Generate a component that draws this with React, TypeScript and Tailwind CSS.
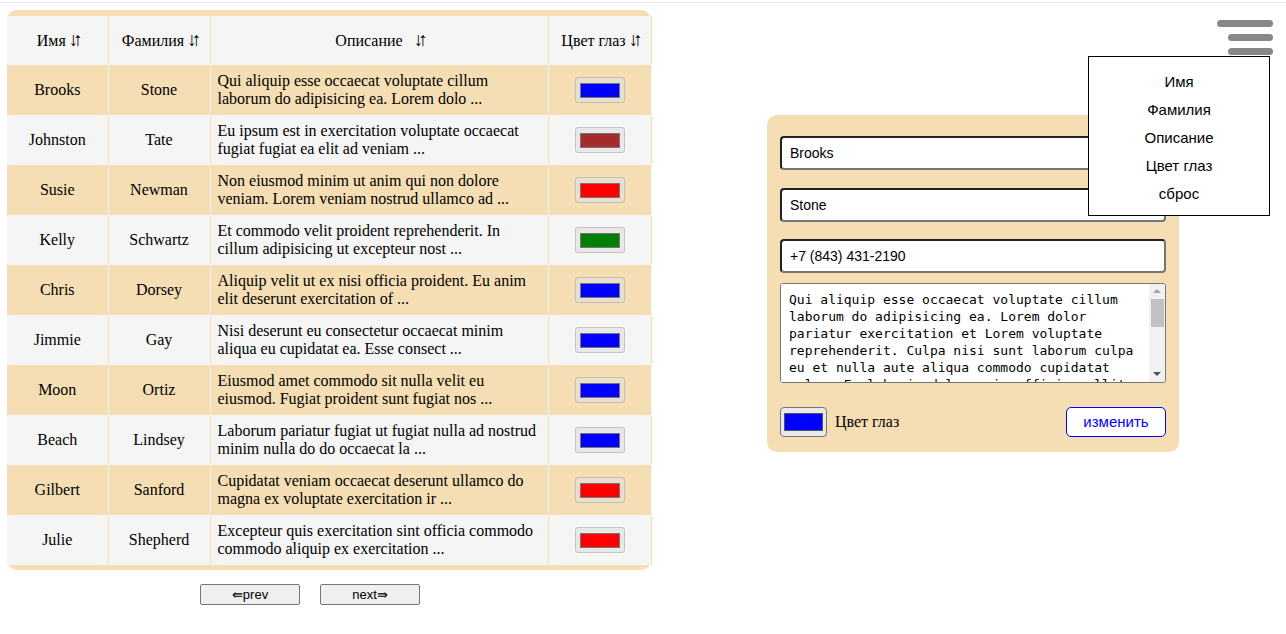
import React from 'react'

const serif = { fontFamily: '"Liberation Serif", "Times New Roman", serif' }
const sans = { fontFamily: '"Liberation Sans", Arial, sans-serif' }

type Person = { first: string; last: string; about: string; eye: string }

const people: Person[] = [
  { first: 'Brooks', last: 'Stone', about: 'Qui aliquip esse occaecat voluptate cillum laborum do adipisicing ea. Lorem dolo ...', eye: '#0000ff' },
  { first: 'Johnston', last: 'Tate', about: 'Eu ipsum est in exercitation voluptate occaecat fugiat fugiat ea elit ad veniam ...', eye: '#a52a2a' },
  { first: 'Susie', last: 'Newman', about: 'Non eiusmod minim ut anim qui non dolore veniam. Lorem veniam nostrud ullamco ad ...', eye: '#ff0000' },
  { first: 'Kelly', last: 'Schwartz', about: 'Et commodo velit proident reprehenderit. In cillum adipisicing ut excepteur nost ...', eye: '#008000' },
  { first: 'Chris', last: 'Dorsey', about: 'Aliquip velit ut ex nisi officia proident. Eu anim elit deserunt exercitation of ...', eye: '#0000ff' },
  { first: 'Jimmie', last: 'Gay', about: 'Nisi deserunt eu consectetur occaecat minim aliqua eu cupidatat ea. Esse consect ...', eye: '#0000ff' },
  { first: 'Moon', last: 'Ortiz', about: 'Eiusmod amet commodo sit nulla velit eu eiusmod. Fugiat proident sunt fugiat nos ...', eye: '#0000ff' },
  { first: 'Beach', last: 'Lindsey', about: 'Laborum pariatur fugiat ut fugiat nulla ad nostrud minim nulla do do occaecat la ...', eye: '#0000ff' },
  { first: 'Gilbert', last: 'Sanford', about: 'Cupidatat veniam occaecat deserunt ullamco do magna ex voluptate exercitation ir ...', eye: '#ff0000' },
  { first: 'Julie', last: 'Shepherd', about: 'Excepteur quis exercitation sint officia commodo commodo aliquip ex exercitation ...', eye: '#ff0000' },
]

const fullText =
  'Qui aliquip esse occaecat voluptate cillum laborum do adipisicing ea. Lorem dolor pariatur exercitation et Lorem voluptate reprehenderit. Culpa nisi sunt laborum culpa eu et nulla aute aliqua commodo cupidatat culpa. Eu laboris dolor enim officia mollit nostrud. Ipsum nulla dolore sunt ad.'

function Swatch({ color }: { color: string }) {
  return (
    <span className="inline-flex h-[26px] w-[50px] items-center justify-center rounded-[3px] border border-black/15 bg-[#e0e0e0]/60 align-middle">
      <span className="block h-[15px] w-[40px] border border-[#777]" style={{ backgroundColor: color }} />
    </span>
  )
}

function SortIcon() {
  return <span className="ml-[3px] inline-block text-[19px] leading-none tracking-[-5px]">↓↑</span>
}

export default function App() {
  return (
    <div className="relative min-h-[634px] w-full bg-white text-black" style={serif}>
      <div className="h-[3px] border-b border-[#e6e6e6]" />

      <div className="flex items-start pl-[7px] pt-[7px]">
        {/* table + pager */}
        <div>
          <div className="w-[644px] rounded-[10px] bg-[#f5deb3] pt-[6px] pb-[5px]">
            <table className="w-[644px] table-fixed border-collapse text-[16px]">
              <colgroup>
                <col className="w-[101px]" />
                <col className="w-[102px]" />
                <col className="w-[338px]" />
                <col className="w-[103px]" />
              </colgroup>
              <thead>
                <tr className="h-[49px] bg-[#f5f5f5]">
                  <th className="border-r border-[#f5deb3] font-normal">
                    Имя<SortIcon />
                  </th>
                  <th className="border-r border-[#f5deb3] font-normal">
                    Фамилия<SortIcon />
                  </th>
                  <th className="border-r border-[#f5deb3] font-normal">
                    Описание &nbsp;<SortIcon />
                  </th>
                  <th className="border-r border-[#f5deb3] font-normal">
                    Цвет глаз<SortIcon />
                  </th>
                </tr>
              </thead>
              <tbody>
                {people.map((p, i) => {
                  const odd = i % 2 === 0
                  const cell = odd ? 'border-r border-[#f5f5f5]' : 'border-r border-[#f5deb3]'
                  return (
                    <tr key={p.first} className={odd ? 'h-[50px] bg-[#f5deb3]' : 'h-[50px] bg-[#f5f5f5]'}>
                      <td className={cell + ' text-center'}>{p.first}</td>
                      <td className={cell + ' text-center'}>{p.last}</td>
                      <td className={cell + ' px-[7px] leading-[18px]'}>{p.about}</td>
                      <td className={cell + ' text-center'}>
                        <Swatch color={p.eye} />
                      </td>
                    </tr>
                  )
                })}
              </tbody>
            </table>
          </div>

          <div className="mt-[14px] flex gap-[20px] pl-[193px]" style={sans}>
            <button className="h-[21px] w-[100px] rounded-[2px] border border-[#767676] bg-[#efefef] text-[13px] leading-none">⇚prev</button>
            <button className="h-[21px] w-[100px] rounded-[2px] border border-[#767676] bg-[#efefef] text-[13px] leading-none">next⇛</button>
          </div>
        </div>

        {/* edit form */}
        <div className="ml-[116px] mt-[105px] flex w-[412px] flex-col rounded-[10px] bg-[#f5deb3] px-[13px] pt-[21px] pb-[15px]">
          <div className="flex flex-col text-[14px]" style={sans}>
            <input
              defaultValue="Brooks"
              className="h-[34px] rounded-[4px] border-2 border-t-[#222] border-l-[#222] border-r-[#767676] border-b-[#767676] bg-white px-[8px]"
            />
            <input
              defaultValue="Stone"
              className="mt-[18px] h-[34px] rounded-[4px] border-2 border-t-[#222] border-l-[#222] border-r-[#767676] border-b-[#767676] bg-white px-[8px]"
            />
            <input
              defaultValue="+7 (843) 431-2190"
              className="mt-[17px] h-[34px] rounded-[4px] border-2 border-t-[#222] border-l-[#222] border-r-[#767676] border-b-[#767676] bg-white px-[8px]"
            />
            <div className="mt-[10px] flex h-[100px] overflow-hidden rounded-[3px] border border-[#767676] bg-white">
              <textarea
                defaultValue={fullText}
                className="h-full flex-1 resize-none overflow-hidden bg-white pt-[7px] pb-[6px] pl-[8px] pr-[4px] text-[13px] leading-[17px]"
                style={{ fontFamily: '"DejaVu Sans Mono", monospace' }}
              />
              {/* scrollbar */}
              <div className="flex w-[16px] flex-col items-center bg-[#f1f1f1]">
                <span className="mt-[5px] block h-0 w-0 border-x-[4px] border-b-[4px] border-x-transparent border-b-[#a3a3a3]" />
                <span className="mt-[6px] block h-[28px] w-[13px] bg-[#c1c1c1]" />
                <span className="mt-auto mb-[6px] block h-0 w-0 border-x-[4px] border-t-[4px] border-x-transparent border-t-[#505050]" />
              </div>
            </div>
          </div>

          <div className="mt-[24px] flex items-center">
            <span className="flex h-[30px] w-[47px] items-center justify-center rounded-[4px] border border-[#767676] bg-[#e9e9e9]">
              <span className="block h-[18px] w-[39px] border border-[#555] bg-[#0000ff]" />
            </span>
            <span className="ml-[8px] text-[16px]">Цвет глаз</span>
            <button
              className="ml-auto h-[30px] w-[100px] rounded-[5px] border border-[#0000ff] bg-white text-[15px] text-[#0000ff]"
              style={sans}
            >
              изменить
            </button>
          </div>
        </div>
      </div>

      {/* burger */}
      <div className="absolute right-[13px] top-[20px] flex flex-col items-end gap-[7px]">
        <span className="block h-[7px] w-[56px] rounded-full bg-[#888]" />
        <span className="block h-[7px] w-[45px] rounded-full bg-[#888]" />
        <span className="block h-[7px] w-[45px] rounded-full bg-[#888]" />
      </div>

      {/* sort menu */}
      <div
        className="absolute left-[1088px] top-[56px] flex w-[182px] flex-col border border-black bg-white pt-[11px] pb-[7px] text-center text-[15px] leading-[28px]"
        style={sans}
      >
        <span>Имя</span>
        <span>Фамилия</span>
        <span>Описание</span>
        <span>Цвет глаз</span>
        <span>сброс</span>
      </div>
    </div>
  )
}
